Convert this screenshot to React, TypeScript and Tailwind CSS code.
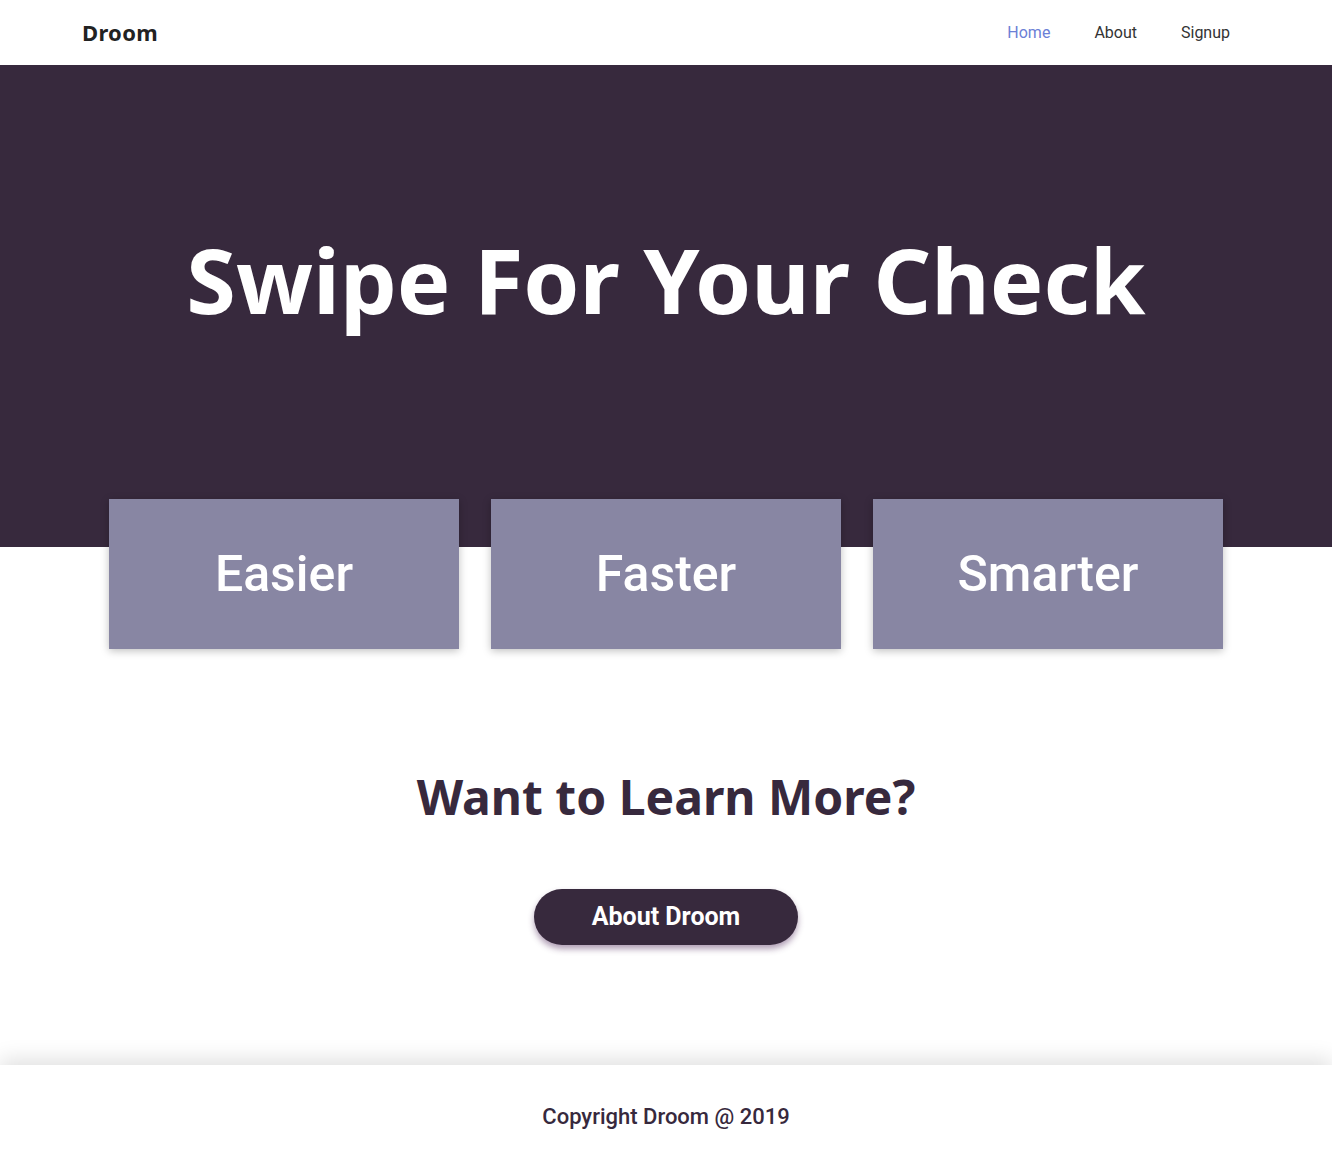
import React from "react";

export default function App() {
  const cards = ["Easier", "Faster", "Smarter"];
  return (
    <div className="min-h-[1167px] w-full bg-white flex flex-col">
      <header className="h-[65px] flex items-center justify-between pl-[82px] pr-[102px]">
        <div
          className="text-[22px] font-bold text-[#222] tracking-[0.3px]"
          style={{ fontFamily: '"Noto Sans", "Open Sans", sans-serif' }}
        >
          Droom
        </div>
        <nav
          className="flex gap-[44px] text-[16px] text-[#333]"
          style={{ fontFamily: "Roboto, sans-serif" }}
        >
          <a className="text-[#6b80d6]">Home</a>
          <a>About</a>
          <a>Signup</a>
        </nav>
      </header>

      <section className="h-[482px] bg-[#37293d] flex justify-center pt-[164px]">
        <h1
          className="text-white text-[90px] font-bold leading-[100px] tracking-[0px] h-[100px]"
          style={{ fontFamily: '"Noto Sans", "Open Sans", sans-serif' }}
        >
          Swipe For Your Check
        </h1>
      </section>

      <div className="flex justify-center gap-[32px] -mt-[48px]">
        {cards.map((c) => (
          <div
            key={c}
            className="w-[350px] h-[150px] bg-[#8886a3] flex items-center justify-center shadow-[0_2px_8px_rgba(0,0,0,0.25)]"
          >
            <span
              className="text-white text-[50px] font-medium"
              style={{ fontFamily: "Roboto, sans-serif" }}
            >
              {c}
            </span>
          </div>
        ))}
      </div>

      <div className="flex flex-col items-center pt-[108px]">
        <h2
          className="text-[#37293d] text-[48px] font-bold leading-[80px]"
          style={{ fontFamily: '"Noto Sans", "Open Sans", sans-serif' }}
        >
          Want to Learn More?
        </h2>
        <button
          className="mt-[52px] w-[264px] h-[56px] rounded-full bg-[#37293d] text-white text-[25px] font-bold shadow-[0_4px_6px_rgba(80,40,90,0.45)]"
          style={{ fontFamily: "Roboto, sans-serif" }}
        >
          About Droom
        </button>
      </div>

      <div className="flex-1" />

      <footer className="h-[102px] bg-white flex items-center justify-center shadow-[0_-6px_20px_rgba(0,0,0,0.12)]">
        <span
          className="text-[#37293d] text-[22px] font-medium"
          style={{ fontFamily: "Roboto, sans-serif" }}
        >
          Copyright Droom @ 2019
        </span>
      </footer>
    </div>
  );
}
